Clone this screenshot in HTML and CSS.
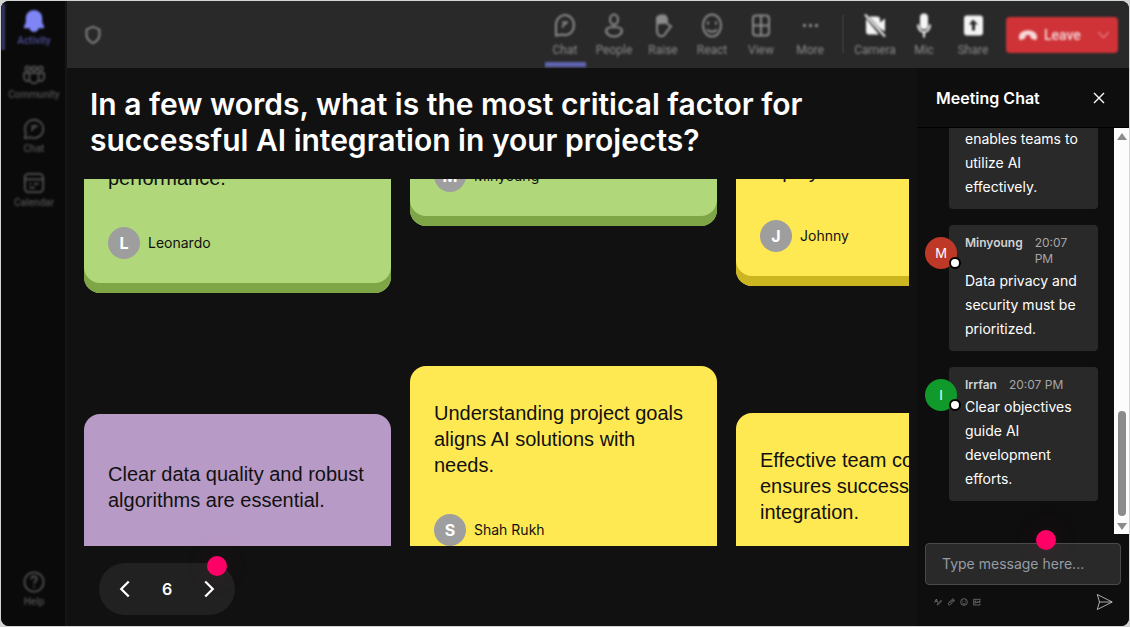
FILE: index.html
```html
<!DOCTYPE html>
<html lang="en">
<head>
    <meta charset="UTF-8">
    <meta name="viewport" content="width=device-width, initial-scale=1.0">
    <title>Meeting</title>
    <link rel="stylesheet" href="styles.css">
</head>
<body>
    <div class="window">
        <nav class="sidebar">
            <a href="#" class="side-item active">
                <svg viewBox="0 0 24 24"><path fill="currentColor" d="M12 1c-5 0-8 4-8 8v5l-2 4v1h20v-1l-2-4V9c0-4-3-8-8-8zM8 20h8c-1 4-7 4-8 0z"/></svg>
                <span>Activity</span>
            </a>
            <a href="#" class="side-item">
                <svg viewBox="0 0 24 24"><circle cx="5" cy="5" r="2.5"/><circle cx="12" cy="5" r="2.5"/><circle cx="19" cy="5" r="2.5"/><path d="M7 10h10v6a5 5 0 0 1-10 0zM7 10H1v5a4 4 0 0 0 6 3M17 10h6v5a4 4 0 0 1-6 3"/></svg>
                <span>Community</span>
            </a>
            <a href="#" class="side-item">
                <svg viewBox="0 0 24 24"><path d="M2 22l1-6a10 10 0 1 1 5 5zM9 9h7M9 14l4-5"/></svg>
                <span>Chat</span>
            </a>
            <a href="#" class="side-item">
                <svg viewBox="0 0 24 24"><rect x="2" y="2" width="20" height="20" rx="4"/><path d="M2 8h20M7 13h2M12 13h5M7 17h6"/></svg>
                <span>Calendar</span>
            </a>
            <a href="#" class="side-item help">
                <svg viewBox="0 0 24 24"><circle cx="12" cy="12" r="10.5"/><path d="M9 9c0-4 6-4 6 0 0 2-3 2-3 5M12 16v2"/></svg>
                <span>Help</span>
            </a>
        </nav>

        <div class="main">
            <header class="toolbar">
                <svg class="shield" viewBox="0 0 24 24"><path d="M12 3l7 3v6c0 5-3 7-7 9-4-2-7-4-7-9V6z"/></svg>
                <div class="tools">
                    <button type="button" class="tool selected">
                        <svg viewBox="0 0 24 24"><path d="M3 22V11a9 10 0 1 1 6 10zM9 9h6M9 14l4-5"/></svg>
                        <span>Chat</span>
                    </button>
                    <button type="button" class="tool">
                        <svg viewBox="0 0 24 24"><ellipse cx="12" cy="6" rx="4" ry="5"/><path d="M5 15c3-2 11-2 14 0 3 4-2 8-7 8s-10-4-7-8z"/></svg>
                        <span>People</span>
                    </button>
                    <button type="button" class="tool">
                        <svg viewBox="0 0 24 24"><path fill="currentColor" d="M6 10V4l3-2h5l2 3v4z"/><path d="M6 10v6c0 9 7 8 9 3l5-6-4-3V5"/></svg>
                        <span>Raise</span>
                    </button>
                    <button type="button" class="tool">
                        <svg viewBox="0 0 24 24"><ellipse cx="12" cy="12" rx="9" ry="11"/><path d="M8 8v3M16 8v3M7 16c3 3 7 3 10 0"/></svg>
                        <span>React</span>
                    </button>
                    <button type="button" class="tool">
                        <svg viewBox="0 0 24 24"><rect x="4" y="2" width="16" height="20" rx="3"/><path d="M12 2v20M4 12h16"/></svg>
                        <span>View</span>
                    </button>
                    <button type="button" class="tool">
                        <svg viewBox="0 0 24 24"><path d="M5 12h3M11 12h3M17 12h3" stroke-width="3"/></svg>
                        <span>More</span>
                    </button>
                </div>
                <div class="devices">
                    <button type="button" class="tool">
                        <svg class="white" viewBox="0 0 24 24"><path fill="currentColor" stroke="none" d="M6 3h8a3 3 0 0 1 3 3v3l5-4v13l-5-3zM3 5l13 16H6a3 3 0 0 1-3-3z"/><path d="M2 1l20 22"/></svg>
                        <span>Camera</span>
                    </button>
                    <button type="button" class="tool">
                        <svg class="white" viewBox="0 0 24 24"><rect fill="currentColor" stroke="none" x="8" y="0" width="8" height="16" rx="4"/><path d="M6 11c0 10 12 10 12 0M12 18v6"/></svg>
                        <span>Mic</span>
                    </button>
                    <button type="button" class="tool">
                        <svg class="white" viewBox="0 0 24 24"><path fill="currentColor" stroke="none" fill-rule="evenodd" d="M6 2h13a3 3 0 0 1 3 3v14a3 3 0 0 1-3 3H6a3 3 0 0 1-3-3V5a3 3 0 0 1 3-3zM12 6l-4 5h3v6h3v-6h3z"/></svg>
                        <span>Share</span>
                    </button>
                </div>
                <button type="button" class="leave">
                    <svg class="phone" viewBox="0 0 24 24"><path fill="currentColor" d="M1 15c-1-11 23-11 22 0 0 3-1 3-3 2l-3-1c-1 0-1-2-1-4-2-1-6-1-8 0 0 2 0 4-1 4l-3 1c-2 1-3 1-3-2z"/></svg>
                    <span>Leave</span>
                    <svg class="caret" viewBox="0 0 24 24"><path d="M2 6l10 12L22 6"/></svg>
                </button>
            </header>

            <div class="content">
                <section class="stage">
                    <h1>In a few words, what is the most critical factor for successful AI integration in your projects?</h1>

                    <div class="wall">
                        <div class="column column-one">
                            <article class="card green">
                                <p>Quality training data and clear evaluation drive model performance.</p>
                                <div class="author"><span class="initial">L</span>Leonardo</div>
                            </article>
                            <article class="card purple">
                                <p>Clear data quality and robust algorithms are essential.</p>
                                <div class="author"><span class="initial">A</span>Amara</div>
                            </article>
                        </div>
                        <div class="column column-two">
                            <article class="card green">
                                <p>Data privacy and security must be prioritized.</p>
                                <div class="author"><span class="initial">M</span>Minyoung</div>
                            </article>
                            <article class="card yellow">
                                <p>Understanding project goals aligns AI solutions with needs.</p>
                                <div class="author"><span class="initial">S</span>Shah Rukh</div>
                            </article>
                        </div>
                        <div class="column column-three">
                            <article class="card yellow">
                                <p>Skilled people who know<br>what to build and how to<br>deploy</p>
                                <div class="author"><span class="initial">J</span>Johnny</div>
                            </article>
                            <article class="card yellow">
                                <p>Effective team collaboration ensures successful AI integration.</p>
                                <div class="author"><span class="initial">P</span>Priya</div>
                            </article>
                        </div>
                    </div>

                    <div class="pager">
                        <button type="button" aria-label="Previous"><svg viewBox="0 0 24 24"><path d="M17 2L7 12l10 10"/></svg></button>
                        <span>6</span>
                        <button type="button" aria-label="Next"><svg viewBox="0 0 24 24"><path d="M7 2l10 10L7 22"/></svg></button>
                        <i class="hotspot"></i>
                    </div>
                </section>

                <aside class="chat">
                    <div class="chat-header">
                        <h2>Meeting Chat</h2>
                        <button type="button" aria-label="Close"><svg viewBox="0 0 12 12"><path d="M1 1l10 10M11 1L1 11"/></svg></button>
                    </div>

                    <div class="chat-body">
                        <div class="messages">
                            <div class="message">
                                <div class="bubble">
                                    <p>Collaboration enables teams to utilize AI effectively.</p>
                                </div>
                            </div>
                            <div class="message">
                                <span class="avatar red">M</span>
                                <div class="bubble">
                                    <div class="meta"><b>Minyoung</b><time>20:07 PM</time></div>
                                    <p>Data privacy and security must be prioritized.</p>
                                </div>
                            </div>
                            <div class="message">
                                <span class="avatar teal">I</span>
                                <div class="bubble">
                                    <div class="meta"><b>Irrfan</b><time>20:07 PM</time></div>
                                    <p>Clear objectives guide AI development efforts.</p>
                                </div>
                            </div>
                        </div>
                        <div class="scrollbar">
                            <span class="arrow up"></span>
                            <span class="thumb"></span>
                            <span class="arrow down"></span>
                        </div>
                    </div>

                    <form class="composer">
                        <input type="text" aria-label="Message" placeholder="Type message here...">
                        <i class="hotspot"></i>
                        <div class="actions">
                            <button type="button" aria-label="Format"><svg viewBox="0 0 24 24"><path d="M2 14L7 3l4 11M4 10h6M9 20L21 7l2 2-12 12z"/></svg></button>
                            <button type="button" aria-label="Attach"><svg viewBox="0 0 24 24"><path d="M8 15l8-8c3-2 5 1 3 3l-9 10c-4 3-8-1-5-5l9-10c5-5 10 1 7 5"/></svg></button>
                            <button type="button" aria-label="Emoji"><svg viewBox="0 0 24 24"><circle cx="12" cy="12" r="10"/><path d="M8 8v3M16 8v3M7 15c3 4 7 4 10 0"/></svg></button>
                            <button type="button" aria-label="GIF"><svg viewBox="0 0 24 24"><path d="M23 4H2v17h19v-4M10 9H6v6h4v-3M14 9v6M23 9h-5v6M18 12h4"/></svg></button>
                            <button type="submit" class="send" aria-label="Send"><svg viewBox="0 0 24 24"><path d="M3 2l20 10L3 22l3-10zM6 12h16"/></svg></button>
                        </div>
                    </form>
                </aside>
            </div>
        </div>
    </div>
</body>
</html>
```
FILE: styles.css
```css
* {
    box-sizing: border-box;
}
body {
    margin: 0;
    padding: 1px;
    height: 100vh;
    background-color: #d4d4d4;
    color: #fff;
    font-family: Inter, sans-serif;
}
h1, h2, p {
    margin: 0;
}
button {
    padding: 0;
    border: none;
    background: none;
    color: inherit;
    font: inherit;
}
svg {
    display: block;
    fill: none;
    stroke: currentColor;
    stroke-width: 2;
}
.window {
    display: flex;
    height: 100%;
    overflow: hidden;
    border-radius: 8px;
    background-color: #111;
}

/* left rail */
.sidebar {
    display: flex;
    flex-direction: column;
    gap: 16px;
    width: 66px;
    padding: 9px 0 17px;
    border-right: 2px solid #151515;
    background-color: #0a0a0a;
}
.side-item {
    display: flex;
    flex-direction: column;
    align-items: center;
    gap: 2px;
    height: 38px;
    padding-left: 2px;
    color: #505050;
    font: 500 10px/14px Roboto, sans-serif;
    text-decoration: none;
    position: relative;
}
.side-item svg, .side-item span {
    filter: blur(1px);
}
.side-item svg {
    width: 22px;
    height: 22px;
}
.side-item.active {
    color: #4c4e98;
}
.side-item.active svg {
    color: #7f85f5;
}
.side-item.active::before {
    content: "";
    position: absolute;
    left: 0;
    top: -6px;
    width: 4px;
    height: 46px;
    background-color: #35376b;
    filter: blur(1px);
}
.side-item.help {
    margin-top: auto;
}

.main {
    display: flex;
    flex: 1;
    flex-direction: column;
    min-width: 0;
}

/* top bar */
.toolbar {
    display: flex;
    align-items: center;
    height: 67px;
    padding: 0 11px 0 15px;
    background-color: #292929;
    font: 12px/14px Roboto, sans-serif;
}
.shield {
    width: 22px;
    height: 22px;
    color: #8a8a8a;
    filter: blur(1px);
}
.tools, .devices {
    display: flex;
    gap: 1px;
}
.tools {
    margin-left: auto;
    padding-right: 8px;
}
.devices {
    position: relative;
    padding: 0 9px;
}
.devices::before {
    content: "";
    position: absolute;
    left: 0;
    top: 14px;
    width: 2px;
    height: 38px;
    background-color: #353535;
}
.tool {
    display: flex;
    flex-direction: column;
    align-items: center;
    gap: 5px;
    width: 48px;
    height: 67px;
    padding-top: 12px;
    color: #8a8a8a;
    position: relative;
}
.tool svg {
    width: 24px;
    height: 25px;
}
.tool svg, .tool span {
    filter: blur(1px);
}
.tool .white {
    color: #f4f4f4;
}
.tool.selected::after {
    content: "";
    position: absolute;
    left: 4px;
    bottom: 1px;
    width: 41px;
    height: 5px;
    background-color: #6064b0;
    filter: blur(1px);
}
.leave {
    display: flex;
    align-items: center;
    gap: 7px;
    width: 112px;
    height: 36px;
    padding: 0 8px 0 13px;
    border-radius: 4px;
    background-color: #cf3338;
    color: #f7d9da;
    font-size: 14px;
    font-weight: 500;
    filter: blur(1px);
}
.phone {
    width: 18px;
    height: 18px;
}
.caret {
    width: 13px;
    height: 12px;
    margin-left: auto;
    color: #f0b4b5;
}

.content {
    display: flex;
    flex: 1;
    min-height: 0;
}

/* answers board */
.stage {
    display: flex;
    flex: 1;
    flex-direction: column;
    min-width: 0;
    padding: 18px 8px 11px 17px;
}
.stage h1 {
    max-width: 760px;
    margin: 0 0 21px 6px;
    font-size: 30px;
    font-weight: 600;
    line-height: 36px;
}
.wall {
    display: flex;
    flex: 1;
    gap: 19px;
    min-height: 0;
    overflow: hidden;
    color: #111;
}
.column {
    display: flex;
    flex: 0 0 307px;
    flex-direction: column;
}
/* columns start above the visible part of the wall */
.column-one {
    gap: 121px;
    margin-top: -100px;
}
.column-two {
    gap: 140px;
    margin-top: -167px;
}
.column-three {
    gap: 127px;
    margin-top: -107px;
}
.card {
    flex: none;
    padding: 24px 24px 34px;
    border-radius: 16px;
}
.card p {
    display: flex;
    align-items: center;
    min-height: 98px;
    margin-bottom: 26px;
    font: 20px/26px "Liberation Sans", Arial, sans-serif;
}
.green {
    background-color: #b0d87a;
    box-shadow: inset 0 -10px #7ea546;
}
.yellow {
    background-color: #ffe953;
    box-shadow: inset 0 -10px #cbb521;
}
.purple {
    background-color: #b89ac6;
    box-shadow: inset 0 -10px #8a6c98;
}
.author {
    display: flex;
    align-items: center;
    gap: 8px;
    font-size: 14px;
    line-height: 20px;
}
.initial {
    width: 32px;
    height: 32px;
    border-radius: 50%;
    background-color: #9e9e9e;
    color: #fff;
    font-size: 16px;
    font-weight: 700;
    line-height: 32px;
    text-align: center;
}
.pager {
    position: relative;
    display: flex;
    align-items: center;
    justify-content: space-between;
    width: 136px;
    height: 52px;
    margin: 17px 0 0 15px;
    padding: 0 16px;
    border-radius: 26px;
    background-color: #212121;
    font-size: 16px;
    font-weight: 600;
}
.pager svg {
    width: 20px;
    height: 18px;
    stroke-width: 3;
}
.hotspot {
    position: absolute;
    width: 20px;
    height: 20px;
    border-radius: 50%;
    background-color: #ff0066;
    box-shadow: 0 0 24px 8px rgba(255, 0, 102, 0.04);
}
.pager .hotspot {
    top: -7px;
    right: 8px;
}

/* chat panel */
.chat {
    display: flex;
    flex-direction: column;
    width: 212px;
    background-color: #0e0e0e;
}
.chat-header {
    display: flex;
    align-items: center;
    justify-content: space-between;
    height: 60px;
    padding: 0 24px 0 19px;
    border-bottom: 1px solid #000;
}
.chat-header h2 {
    font-size: 16px;
    font-weight: 600;
    line-height: 24px;
}
.chat-header svg {
    width: 12px;
    height: 12px;
    stroke-width: 1.4;
}
.chat-body {
    display: flex;
    flex: 1;
    min-height: 0;
}
.messages {
    display: flex;
    flex: 1;
    flex-direction: column;
    justify-content: flex-end;
    gap: 16px;
    min-width: 0;
    overflow: hidden;
    padding: 0 16px 33px 32px;
}
.message {
    position: relative;
}
.bubble {
    padding: 10px 16px;
    border-radius: 4px;
    background-color: #292929;
    font-size: 14px;
    line-height: 24px;
}
.meta {
    display: flex;
    gap: 12px;
    margin-bottom: 2px;
    color: #a6a6a6;
    font-size: 12px;
    line-height: 16px;
}
.meta b {
    color: #d2d2d2;
    font-weight: 600;
}
.avatar {
    position: absolute;
    top: 12px;
    left: -24px;
    width: 32px;
    height: 32px;
    border-radius: 50%;
    font-size: 13px;
    line-height: 32px;
    text-align: center;
}
.avatar::after {
    content: "";
    position: absolute;
    right: -4px;
    bottom: 0;
    width: 8px;
    height: 8px;
    border: 2px solid #000;
    border-radius: 50%;
    background-color: #fff;
    box-sizing: content-box;
}
.red {
    background-color: #bd3826;
}
.teal {
    background-color: #109a2b;
}
.scrollbar {
    display: flex;
    flex-direction: column;
    align-items: center;
    width: 15px;
    padding: 5px 0 4px;
    background-color: #fcfcfc;
}
.arrow {
    border: 5px solid transparent;
}
.up {
    border-top: none;
    border-bottom: 7px solid #8b8b8b;
}
.down {
    border-bottom: none;
    border-top: 7px solid #8b8b8b;
}
.thumb {
    width: 8px;
    height: 105px;
    margin: auto 0 7px;
    border-radius: 4px;
    background-color: #8b8b8b;
}
.composer {
    position: relative;
    padding: 9px 8px 15px;
}
.composer input {
    display: block;
    width: 100%;
    height: 42px;
    padding: 0 16px 2px;
    border: 1px solid #4a4a4a;
    border-radius: 4px;
    background-color: #292929;
    color: #fff;
    font: 14px/20px Inter, sans-serif;
}
.composer input::placeholder {
    color: #969ca6;
}
.composer .hotspot {
    top: -4px;
    left: 119px;
}
.actions {
    display: flex;
    align-items: center;
    gap: 5px;
    margin-top: 8px;
    padding: 0 8px 0 9px;
    color: #8c8c8c;
}
.actions svg {
    width: 8px;
    height: 8px;
}
.actions .send {
    margin-left: auto;
    color: #e0e0e0;
}
.actions .send svg {
    width: 18px;
    height: 18px;
    stroke-width: 1;
}
```
